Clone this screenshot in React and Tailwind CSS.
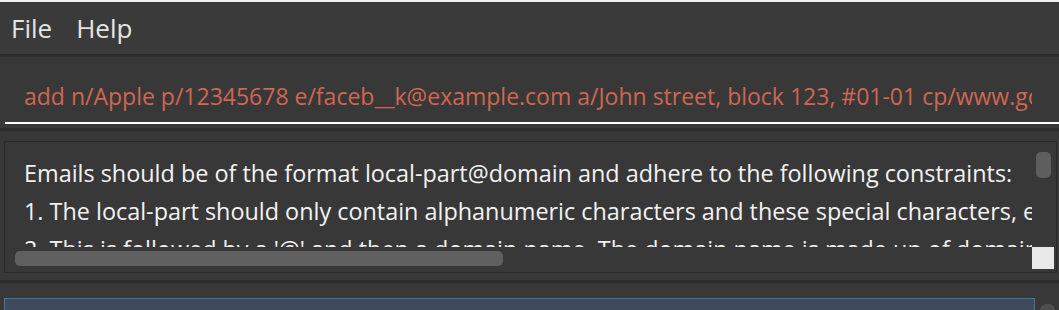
export default function App() {
    const font = { fontFamily: '"Open Sans", "Noto Sans", sans-serif' };

    return (
        <div className="w-[1059px] h-[310px] overflow-hidden bg-[#383838] flex flex-col" style={font}>
            <div className="shrink-0 h-[2px] bg-[#f0f0f0]" />

            {/* menu bar */}
            <div className="shrink-0 h-[52px] bg-[#3a3a3a] flex items-center gap-[24px] pl-[11px] text-[26px] text-[#e4e4e4]">
                <span>File</span>
                <span>Help</span>
            </div>
            <div className="shrink-0 h-[3px] bg-[#2c2c2c]" />

            {/* command box */}
            <div className="shrink-0 h-[71px] bg-[#383838] pl-[5px] pt-[16px]">
                <div className="h-[51px] flex flex-col">
                    <div className="flex-1 overflow-hidden pl-[19px] w-[1027px] whitespace-nowrap text-[23px] leading-[46px] text-[#d06651]">
                        add n/Apple p/12345678 e/faceb__k@example.com a/John street, block 123, #01-01 cp/www.google.com
                    </div>
                    <div className="h-[2px] bg-white" />
                </div>
            </div>
            <div className="shrink-0 h-[3px] bg-[#2c2c2c]" />

            {/* result display */}
            <div className="shrink-0 h-[149px] bg-[#383838] pt-[10px] pl-[4px] pr-[2px] pb-[7px]">
                <div className="h-full border border-[#2a2a2a] grid grid-cols-[1fr_22px] grid-rows-[1fr_22px] pb-[3px] pr-[2px]">
                    <div className="overflow-hidden whitespace-nowrap pl-[19px] pt-[12px] text-[23.4px] leading-[38px] text-[#f2f2f2]">
                        <div>Emails should be of the format local-part@domain and adhere to the following constraints:</div>
                        <div>1. The local-part should only contain alphanumeric characters and these special characters, excluding the parentheses, (+_.-).</div>
                        <div>2. This is followed by a '@' and then a domain name. The domain name is made up of domain labels separated by periods.</div>
                    </div>
                    <div className="flex justify-center pt-[10px]">
                        <div className="w-[15px] h-[26px] rounded-[5px] bg-[#5e5e5e]" />
                    </div>
                    <div className="flex items-center pl-[10px]">
                        <div className="w-[488px] h-[15px] rounded-[5px] bg-[#606060]" />
                    </div>
                    <div className="bg-[#e8e8e8]" />
                </div>
            </div>
            <div className="shrink-0 h-[3px] bg-[#2c2c2c]" />

            {/* person list */}
            <div className="flex-1 min-h-0 overflow-hidden bg-[#383838] pt-[15px] pl-[4px] flex gap-[5px]">
                <div className="shrink-0 w-[1031px] h-[40px] border border-[#3b7a8f] bg-[#3f4b5c]" />
                <div className="shrink-0 w-[15px] h-[40px] mt-[6px] rounded-[6px] bg-[#4e4e4e]" />
            </div>
        </div>
    );
}
